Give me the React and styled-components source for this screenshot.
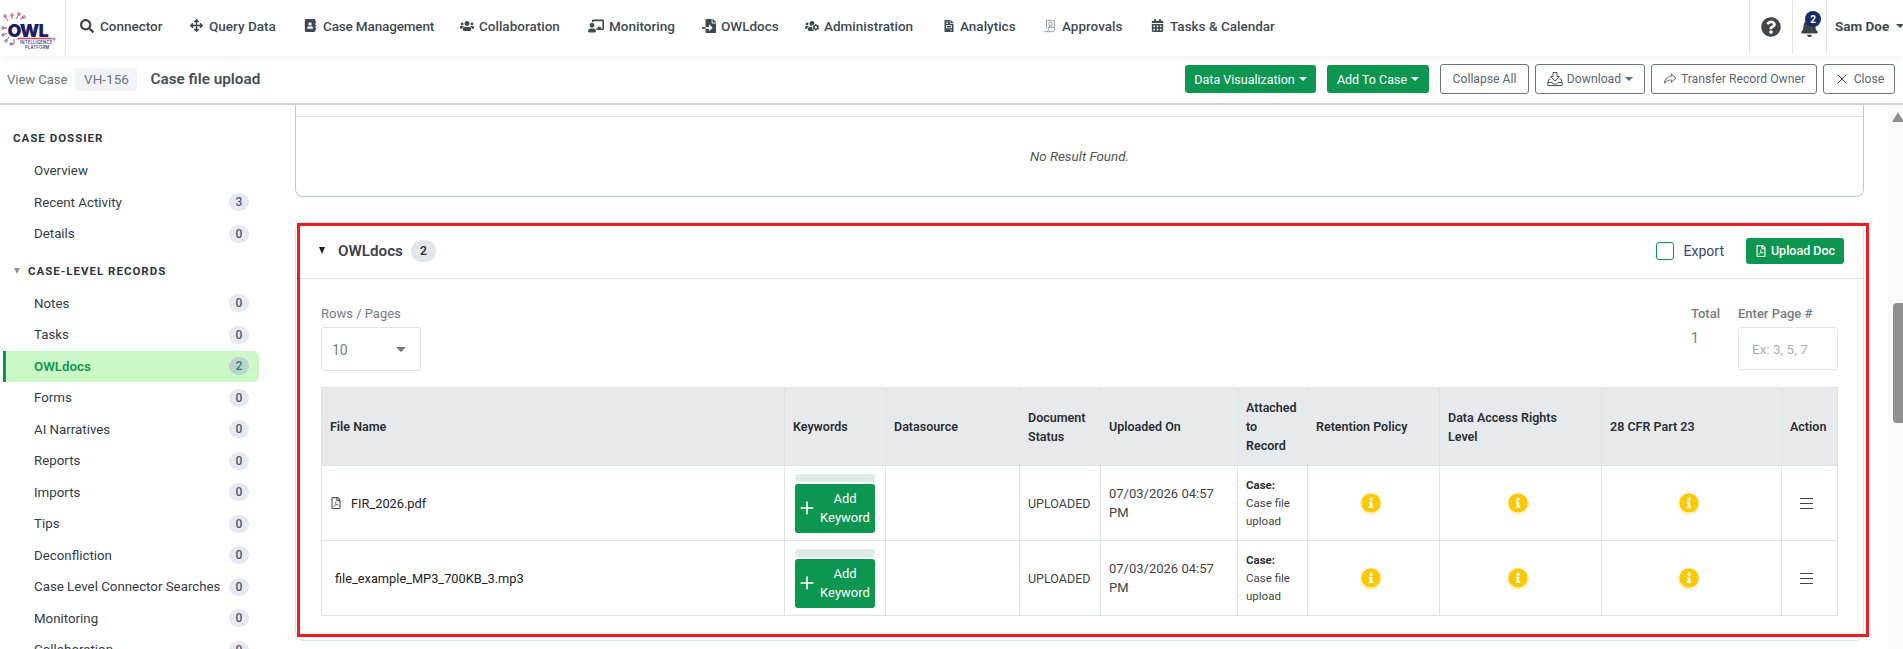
import React from "react";
import styled, { createGlobalStyle } from "styled-components";
import {
  FaSearch, FaArrowsAlt, FaAddressBook, FaUsers, FaChalkboardTeacher, FaFileImport, FaUsersCog,
  FaFileInvoice, FaCalendarAlt, FaQuestionCircle, FaBell, FaRegFilePdf, FaInfoCircle,
} from "react-icons/fa";
import { PiShareFat } from "react-icons/pi";
import { X, Plus } from "lucide-react";

const FONT = `Roboto, "Liberation Sans", sans-serif`;

const Global = createGlobalStyle`
  html, body { margin: 0; height: 100%; overflow: hidden; background: #fff; }
  body { font-family: ${FONT}; color: #212529; }
  #root { height: 100%; }
  * { box-sizing: border-box; }
`;

const Page = styled.div`
  display: flex;
  flex-direction: column;
  height: 649px;
  width: 1903px;
  overflow: hidden;
`;

/* ---------- top bar ---------- */
const TopBar = styled.header`
  position: relative;
  z-index: 2;
  flex: none;
  display: flex;
  align-items: stretch;
  height: 56px;
  background: #fff;
  box-shadow: 0 2px 7px rgba(0, 0, 0, 0.06);
`;
const LogoBox = styled.div`
  flex: none;
  width: 66px;
  border-right: 1px solid #e6e6e6;
  margin-bottom: 1px;
  display: flex;
  align-items: center;
`;
const Nav = styled.nav`
  flex: 1;
  display: flex;
  align-items: center;
  padding: 0 0 5px 14px;
`;
const NavItem = styled.a`
  flex: none;
  width: ${(p) => p.$w}px;
  display: flex;
  align-items: center;
  gap: ${(p) => p.$gap ?? 6}px;
  font-size: 13.5px;
  letter-spacing: ${(p) => p.$track ?? 0}px;
  font-weight: 500;
  color: #3f4a54;
  white-space: nowrap;
  svg { flex: none; color: #3f4a54; }
`;
const TopTool = styled.div`
  flex: none;
  width: ${(p) => p.$w}px;
  border-left: 1px solid #e6e6e6;
  margin-bottom: 2px;
  display: flex;
  align-items: center;
  justify-content: center;
  position: relative;
`;
const CountDot = styled.span`
  position: absolute;
  top: 11px;
  left: 12px;
  width: 16px;
  height: 16px;
  border-radius: 50%;
  background: #1c2a68;
  color: #fff;
  font-size: 10px;
  font-weight: 700;
  display: flex;
  align-items: center;
  justify-content: center;
`;
const UserMenu = styled.div`
  flex: none;
  width: 77px;
  border-left: 1px solid #e6e6e6;
  margin-bottom: 2px;
  padding: 0 0 3px 8px;
  display: flex;
  align-items: center;
  gap: 7px;
  font-size: 13.5px;
  font-weight: 700;
  color: #3f4a54;
  white-space: nowrap;
`;
const Caret = styled.i`
  flex: none;
  display: inline-block;
  width: 0;
  height: 0;
  border-left: ${(p) => p.$s ?? 4}px solid transparent;
  border-right: ${(p) => p.$s ?? 4}px solid transparent;
  border-top: ${(p) => p.$s ?? 4}px solid currentColor;
  color: ${(p) => p.$color ?? "inherit"};
`;

/* ---------- case bar ---------- */
const CaseBar = styled.div`
  flex: none;
  height: 49px;
  border-bottom: 2px solid #d2d2d2;
  display: flex;
  align-items: center;
  padding: 0 8px 1px 7px;
  background: #fff;
`;
const Crumb = styled.span`
  font-size: 13px;
  color: #6c757d;
`;
const CaseChip = styled.span`
  margin-left: 8px;
  width: 62px;
  height: 23px;
  border-radius: 3px;
  background: #f1f3f6;
  color: #6c757d;
  font-size: 13.5px;
  display: flex;
  align-items: center;
  justify-content: center;
`;
const CaseTitle = styled.h1`
  margin: 0 0 0 13px;
  font-size: 15.3px;
  font-weight: 600;
  color: #464f58;
`;
const BarActions = styled.div`
  margin-left: auto;
  display: flex;
  align-items: center;
`;
const GreenBtn = styled.button`
  font-family: ${FONT};
  height: 28px;
  width: ${(p) => p.$w}px;
  margin-right: ${(p) => p.$mr ?? 0}px;
  border: 0;
  border-radius: 3px;
  background: #0c964f;
  color: #fff;
  font-size: 12.5px;
  font-weight: 400;
  display: flex;
  align-items: center;
  justify-content: center;
  gap: 4px;
  white-space: nowrap;
`;
const LineBtn = styled.button`
  font-family: ${FONT};
  height: 30px;
  width: ${(p) => p.$w}px;
  margin-right: ${(p) => p.$mr ?? 0}px;
  border: 1px solid #6c757d;
  border-radius: 3px;
  background: #fff;
  color: #5d6973;
  font-size: 12.2px;
  display: flex;
  align-items: center;
  justify-content: center;
  gap: 4px;
  white-space: nowrap;
  svg.dark { color: #3f4448; }
`;

/* ---------- body ---------- */
const Body = styled.div`
  flex: 1;
  min-height: 0;
  display: flex;
  overflow: hidden;
`;
const Sidebar = styled.aside`
  flex: none;
  width: 295px;
  padding: 25px 0 0 3px;
`;
const SectionTitle = styled.div`
  height: 16px;
  line-height: 16px;
  margin: ${(p) => p.$top ?? 0}px 0 ${(p) => p.$bottom ?? 9}px;
  padding-left: ${(p) => p.$pad ?? 10}px;
  font-size: 11.5px;
  font-weight: 700;
  letter-spacing: 1px;
  color: #2c3440;
  display: flex;
  align-items: center;
  gap: 8px;
`;
const SmallTri = styled.i`
  width: 0;
  height: 0;
  margin-left: 2px;
  border-left: 3.5px solid transparent;
  border-right: 3.5px solid transparent;
  border-top: 6px solid #8a90a8;
`;
const SideRow = styled.div`
  width: 256px;
  height: 31.5px;
  border-left: 3px solid ${(p) => (p.$active ? "#0c964f" : "transparent")};
  border-radius: 0 6px 6px 0;
  background: ${(p) => (p.$active ? "#ccf8c8" : "transparent")};
  color: ${(p) => (p.$active ? "#0c964f" : "#333b48")};
  font-weight: ${(p) => (p.$active ? 600 : 400)};
  font-size: 13.3px;
  padding: 0 10px 0 28px;
  display: flex;
  align-items: center;
  justify-content: space-between;
  white-space: nowrap;
`;
const SideCount = styled.span`
  flex: none;
  width: 20px;
  height: 18px;
  border-radius: 9px;
  background: ${(p) => (p.$active ? "#bfd0d0" : "#e6e9f2")};
  color: ${(p) => (p.$active ? "#0c964f" : "#4d5878")};
  font-size: 12px;
  font-weight: 500;
  display: flex;
  align-items: center;
  justify-content: center;
`;
const Main = styled.main`
  flex: 1;
  min-width: 0;
  padding-right: 24px;
`;
const EmptyCard = styled.section`
  height: 92px;
  border: 1px solid #bccad4;
  border-top: 0;
  border-radius: 0 0 8px 8px;
  padding-top: 11px;
`;
const EmptyBody = styled.div`
  height: 80px;
  border-top: 1px solid #dfe3ea;
  font-size: 13.4px;
  font-style: italic;
  color: #555;
  display: flex;
  align-items: center;
  justify-content: center;
`;
const DocsCard = styled.section`
  position: relative;
  margin-top: 25px;
  height: 419px;
  border: 1px solid #dfe3ea;
  border-radius: 8px;
  background: #fff;
`;
const RedMark = styled.div`
  position: absolute;
  left: 1px;
  top: 0;
  right: -6px;
  bottom: 3px;
  border: 3px solid #ed1c24;
  pointer-events: none;
`;
const DocsHead = styled.div`
  height: 56px;
  border-bottom: 1px solid #dfe3ea;
  display: flex;
  align-items: center;
  padding: 0 19px 0 23px;
`;
const HeadTri = styled.i`
  width: 0;
  height: 0;
  border-left: 3.5px solid transparent;
  border-right: 3.5px solid transparent;
  border-top: 7px solid #222;
`;
const DocsTitle = styled.h2`
  margin: 0 8px 0 13px;
  font-size: 15.2px;
  font-weight: 600;
  color: #3a424c;
`;
const DocsCount = styled.span`
  width: 25px;
  height: 22px;
  border-radius: 11px;
  background: #e2e5e9;
  color: #333;
  font-size: 12px;
  font-weight: 600;
  display: flex;
  align-items: center;
  justify-content: center;
`;
const ExportBox = styled.span`
  margin-left: auto;
  width: 18px;
  height: 18px;
  border: 1px solid #0c964f;
  border-radius: 3px;
`;
const ExportLabel = styled.span`
  margin: 0 22px 0 10px;
  font-size: 14px;
  color: #3a4672;
`;
const UploadBtn = styled.button`
  font-family: ${FONT};
  width: 98px;
  height: 26px;
  border: 0;
  border-radius: 3px;
  background: #0c964f;
  color: #fff;
  font-size: 12.5px;
  font-weight: 500;
  display: flex;
  align-items: center;
  justify-content: center;
  gap: 4px;
  white-space: nowrap;
`;
const DocsBody = styled.div`
  padding: 26px 25px 0;
`;
const Controls = styled.div`
  display: flex;
  justify-content: space-between;
  margin-bottom: 16px;
`;
const Field = styled.div`
  display: flex;
  flex-direction: column;
`;
const FieldLabel = styled.label`
  height: 22px;
  line-height: 18px;
  font-size: 13px;
  color: #737c85;
  font-weight: ${(p) => (p.$strong ? 500 : 400)};
`;
const SelectBox = styled.div`
  width: 100px;
  height: 44px;
  border: 1px solid #dfe3e8;
  border-radius: 3px;
  padding: 1px 14px 0 10px;
  display: flex;
  align-items: center;
  justify-content: space-between;
  font-size: 14px;
  color: #78818a;
`;
const RightFields = styled.div`
  display: flex;
  gap: 18px;
`;
const TotalValue = styled.span`
  font-size: 14px;
  line-height: 22px;
  color: #737c85;
`;
const PageInput = styled.div`
  width: 100px;
  height: 43px;
  border: 1px solid #e4e7eb;
  border-radius: 3px;
  padding-left: 13px;
  display: flex;
  align-items: center;
  font-size: 13.5px;
  color: #adb1b5;
`;
const Table = styled.table`
  width: 1516px;
  table-layout: fixed;
  border-collapse: collapse;
  font-size: 12.5px;
  line-height: 19px;
  th, td { border: 1px solid #dfe3e8; padding: 0 8px; text-align: left; vertical-align: middle; }
  th { background: #e7eaed; color: #2a2f35; font-weight: 600; }
  thead tr { height: 78px; }
  tbody tr { height: 75px; }
`;
const Center = styled.span`
  display: flex;
  justify-content: center;
  padding-right: 5px;
`;
const InfoDot = styled(FaInfoCircle)`
  width: 20px;
  height: 20px;
  color: #ffc800;
  border-radius: 50%;
  box-shadow: 0 1px 0 1px #fff3c4;
`;
const FileCell = styled.span`
  display: flex;
  align-items: center;
  gap: 9px;
  padding-left: ${(p) => p.$pad ?? 0}px;
  color: #222;
  font-size: 12.8px;
  svg { color: #555; }
`;
const KeywordBar = styled.div`
  height: 8px;
  width: 80px;
  margin: 0 0 2px 2px;
  border-radius: 4px;
  background: #dfece6;
`;
const KeywordBtn = styled.button`
  font-family: ${FONT};
  width: 80px;
  height: 49px;
  margin-left: 2px;
  border: 0;
  border-radius: 3px;
  background: #0c964f;
  color: #fff;
  font-size: 13px;
  line-height: 19px;
  padding: 0 2px;
  display: flex;
  align-items: center;
  justify-content: space-between;
  span { flex: 1; text-align: center; }
`;
const StatusCell = styled.span`
  display: block;
  color: #444;
  font-size: 12.5px;
  white-space: nowrap;
`;
const DateCell = styled.span`
  color: #444;
  font-size: 13px;
`;
const Attached = styled.div`
  font-size: 11.5px;
  line-height: 18px;
  color: #444;
  b { display: block; color: #2a2f35; font-weight: 700; }
`;
const Burger = styled.svg`
  display: block;
  margin: 0 auto;
  padding-right: 0;
  transform: translateX(-3px);
`;
const ScrollTrack = styled.div`
  flex: none;
  width: 15px;
  background: #f9f9f9;
  padding-top: 7px;
  position: relative;
`;
const ScrollArrow = styled.i`
  display: block;
  width: 0;
  height: 0;
  margin-left: 4px;
  border-left: 6px solid transparent;
  border-right: 6px solid transparent;
  border-bottom: 10px solid #8f8f8f;
`;
const ScrollThumb = styled.div`
  margin: 181px 0 0 5px;
  width: 10px;
  height: 120px;
  border-radius: 4px 0 0 4px;
  background: #8f8f8f;
`;

const Logo = () => (
  <svg width="65" height="48" viewBox="0 0 65 48">
    <g fill="none" stroke="#c6476e" strokeWidth="0.9">
      <path d="M8 17 L5 12 M12 15 V11 M16 15 L19 10 M20 15 L24 13" />
      <circle cx="5" cy="12" r="1.3" /><circle cx="12" cy="11" r="1.3" /><circle cx="19" cy="10" r="1.3" /><circle cx="24" cy="13" r="1.3" />
    </g>
    <g fill="none" stroke="#6d5aa0" strokeWidth="0.9">
      <path d="M7 24 H3 M7 29 L3 31 M9 33 L6 37 M14 35 V40 H11" />
      <circle cx="3" cy="24" r="1.2" /><circle cx="3" cy="31" r="1.2" /><circle cx="6" cy="37" r="1.2" /><circle cx="11" cy="40" r="1.2" />
    </g>
    <text x="7.5" y="33" fontFamily="Inter, sans-serif" fontWeight="900" fontSize="18" letterSpacing="-0.8" fill="#1b2160">OWL</text>
    <path d="M18 34.5 H52" stroke="#e0455f" strokeWidth="1.3" />
    <circle cx="54" cy="35" r="1.2" fill="none" stroke="#6d5aa0" strokeWidth="0.8" />
    <text x="20" y="40" fontFamily="Inter, sans-serif" fontWeight="600" fontSize="4.2" letterSpacing="0.2" fill="#4a3f85">INTELLIGENCE</text>
    <text x="25" y="44.5" fontFamily="Inter, sans-serif" fontWeight="600" fontSize="4.2" letterSpacing="0.2" fill="#4a3f85">PLATFORM</text>
  </svg>
);

const DownloadGlyph = () => (
  <svg width="16" height="16" viewBox="0 0 16 16" fill="none" stroke="#4d5862" strokeWidth="1">
    <path d="M6 1.5h4v4h2.5L8 10 3.5 5.5H6z" />
    <path d="M3.5 8H2L.8 11.5v3h14.4v-3L14 8h-1.5M.8 11.5h4.4l1 1.5h3.6l1-1.5h4.4" />
  </svg>
);

const ApprovalGlyph = ({ size }) => (
  <svg width={size} height={size} viewBox="0 0 16 16" fill="none" stroke="#7d858c" strokeWidth="0.9">
    <path d="M4 1.5h9v8M4 1.5v9M1.5 14.5h10c1 0 1.5-.8 1.5-2v-3H6v3c0 1.2-.6 2-1.6 2" />
    <circle cx="8.5" cy="5.5" r="2" />
    <path d="M7.5 7.5 7 9.5M9.5 7.5l.5 2" />
  </svg>
);

const navItems = [
  { label: "Connector", Icon: FaSearch, size: 14, w: 110, gap: 6 },
  { label: "Query Data", Icon: FaArrowsAlt, size: 13, w: 114, gap: 6 },
  { label: "Case Management", Icon: FaAddressBook, size: 13, w: 156, gap: 6, track: -0.15 },
  { label: "Collaboration", Icon: FaUsers, size: 14, w: 128, gap: 5 },
  { label: "Monitoring", Icon: FaChalkboardTeacher, size: 16, w: 114, gap: 5 },
  { label: "OWLdocs", Icon: FaFileImport, size: 14, w: 103, gap: 5 },
  { label: "Administration", Icon: FaUsersCog, size: 14, w: 138, gap: 5 },
  { label: "Analytics", Icon: FaFileInvoice, size: 12, w: 100, gap: 5 },
  { label: "Approvals", Icon: ApprovalGlyph, size: 14, w: 108, gap: 5 },
  { label: "Tasks & Calendar", Icon: FaCalendarAlt, size: 13, w: 130, gap: 6 },
];

const dossier = [["Overview"], ["Recent Activity", 3], ["Details", 0]];
const records = [
  ["Notes", 0], ["Tasks", 0], ["OWLdocs", 2, true], ["Forms", 0], ["AI Narratives", 0], ["Reports", 0],
  ["Imports", 0], ["Tips", 0], ["Deconfliction", 0], ["Case Level Connector Searches", 0], ["Monitoring", 0], ["Collaboration", 0],
];
const colWidths = [463, 101, 134, 81, 137, 70, 132, 162, 180, 56];
const headers = [
  "File Name", "Keywords", "Datasource", "Document Status", "Uploaded On", "Attached to Record",
  "Retention Policy", <>Data Access Rights<br />Level</>, "28 CFR Part 23", "Action",
];
const files = [
  { name: "FIR_2026.pdf", pdf: true },
  { name: "file_example_MP3_700KB_3.mp3" },
];

const SideItem = ({ item }) => (
  <SideRow $active={item[2]}>
    {item[0]}
    {item[1] !== undefined && <SideCount $active={item[2]}>{item[1]}</SideCount>}
  </SideRow>
);

export default function App() {
  return (
    <Page>
      <Global />
      <TopBar>
        <LogoBox><Logo /></LogoBox>
        <Nav>
          {navItems.map(({ label, Icon, size, w, gap, track }) => (
            <NavItem key={label} $w={w} $gap={gap} $track={track}><Icon size={size} />{label}</NavItem>
          ))}
        </Nav>
        <TopTool $w={43}><FaQuestionCircle size={20} color="#3f4448" /></TopTool>
        <TopTool $w={34}><FaBell size={19} color="#3f4448" /><CountDot>2</CountDot></TopTool>
        <UserMenu>Sam Doe<Caret $s={4} /></UserMenu>
      </TopBar>
      <CaseBar>
        <Crumb>View Case</Crumb>
        <CaseChip>VH-156</CaseChip>
        <CaseTitle>Case file upload</CaseTitle>
        <BarActions>
          <GreenBtn $w={131} $mr={11}>Data Visualization <Caret /></GreenBtn>
          <GreenBtn $w={102} $mr={11}>Add To Case <Caret /></GreenBtn>
          <LineBtn $w={89} $mr={6}>Collapse All</LineBtn>
          <LineBtn $w={110} $mr={6}><DownloadGlyph /> Download <Caret /></LineBtn>
          <LineBtn $w={166} $mr={6}><PiShareFat size={14} /> Transfer Record Owner</LineBtn>
          <LineBtn $w={72}><X className="dark" size={16} strokeWidth={1.4} /> Close</LineBtn>
        </BarActions>
      </CaseBar>
      <Body>
        <Sidebar>
          <SectionTitle>CASE DOSSIER</SectionTitle>
          {dossier.map((it) => <SideItem key={it[0]} item={it} />)}
          <SectionTitle $top={13} $bottom={9} $pad={9}><SmallTri />CASE-LEVEL RECORDS</SectionTitle>
          {records.map((it) => <SideItem key={it[0]} item={it} />)}
        </Sidebar>
        <Main>
          <EmptyCard><EmptyBody>No Result Found.</EmptyBody></EmptyCard>
          <DocsCard>
            <RedMark />
            <DocsHead>
              <HeadTri />
              <DocsTitle>OWLdocs</DocsTitle>
              <DocsCount>2</DocsCount>
              <ExportBox />
              <ExportLabel>Export</ExportLabel>
              <UploadBtn><FaRegFilePdf size={12} /> Upload Doc</UploadBtn>
            </DocsHead>
            <DocsBody>
              <Controls>
                <Field>
                  <FieldLabel>Rows / Pages</FieldLabel>
                  <SelectBox>10<Caret $s={5} $color="#777" /></SelectBox>
                </Field>
                <RightFields>
                  <Field>
                    <FieldLabel $strong>Total</FieldLabel>
                    <TotalValue>1</TotalValue>
                  </Field>
                  <Field>
                    <FieldLabel $strong>Enter Page #</FieldLabel>
                    <PageInput>Ex: 3, 5, 7</PageInput>
                  </Field>
                </RightFields>
              </Controls>
              <Table>
                <colgroup>{colWidths.map((w, i) => <col key={i} width={w} />)}</colgroup>
                <thead>
                  <tr>{headers.map((h, i) => <th key={i}>{h}</th>)}</tr>
                </thead>
                <tbody>
                  {files.map((f) => (
                    <tr key={f.name}>
                      <td>
                        <FileCell $pad={f.pdf ? 0 : 5}>
                          {f.pdf && <FaRegFilePdf size={12} />}{f.name}
                        </FileCell>
                      </td>
                      <td>
                        <KeywordBar />
                        <KeywordBtn><Plus size={20} strokeWidth={2} /><span>Add Keyword</span></KeywordBtn>
                      </td>
                      <td />
                      <td><StatusCell>UPLOADED</StatusCell></td>
                      <td><DateCell>07/03/2026 04:57 PM</DateCell></td>
                      <td><Attached><b>Case:</b>Case file upload</Attached></td>
                      <td><Center><InfoDot /></Center></td>
                      <td><Center><InfoDot /></Center></td>
                      <td><Center><InfoDot /></Center></td>
                      <td>
                        <Burger width="13" height="11" viewBox="0 0 13 11" stroke="#444" strokeWidth="1">
                          <path d="M0 .5h13M0 5.5h13M0 10.5h13" />
                        </Burger>
                      </td>
                    </tr>
                  ))}
                </tbody>
              </Table>
            </DocsBody>
          </DocsCard>
        </Main>
        <ScrollTrack>
          <ScrollArrow />
          <ScrollThumb />
        </ScrollTrack>
      </Body>
    </Page>
  );
}
